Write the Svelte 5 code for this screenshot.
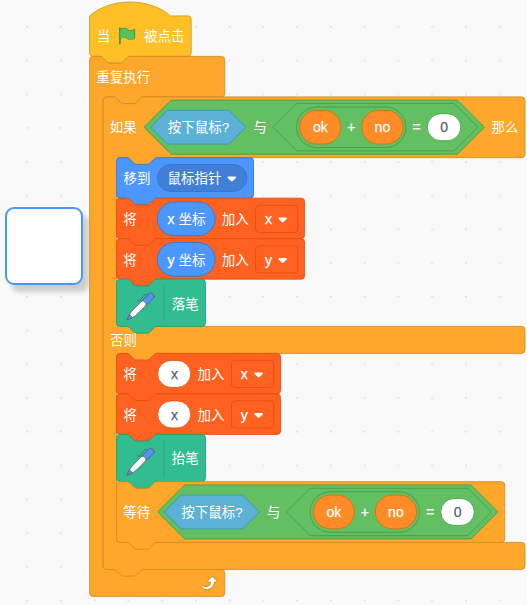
<script>
  const U = 0.84375;
  const OX = 89.6;
  const OY = 56.4;
  const notch = 'c2,0 3,1 4,2 l4,4 c1,1 2,2 4,2 h12 c2,0 3,-1 4,-2 l4,-4 c1,-1 2,-2 4,-2';
  const notchBack = 'c-2,0 -3,1 -4,2 l-4,4 c-1,1 -2,2 -4,2 h-12 c-2,0 -3,-1 -4,-2 l-4,-4 c-1,-1 -2,-2 -4,-2';

  const top = (x, y, w) => `M${x},${y + 4} a4,4 0 0 1 4,-4 h8 ${notch} H${x + w - 4} a4,4 0 0 1 4,4`;
  const bottom = (x, y, tab = true) =>
    `V${y - 4} a4,4 0 0 1 -4,4 ${tab ? `H${x + 48} ${notchBack}` : ''} H${x + 4} a4,4 0 0 1 -4,-4 Z`;
  const stack = (x, y, w, h) => `${top(x, y, w)} ${bottom(x, y + h)}`;
  const mouth = (x, w, y1, y2) =>
    `V${y1 - 4} a4,4 0 0 1 -4,4 H${x + 64} ${notchBack} h-8 a4,4 0 0 0 -4,4 V${y2 - 4} a4,4 0 0 0 4,4 H${x + w - 4} a4,4 0 0 1 4,4`;

  const hat = `M0,-48 c25,-22 71,-22 96,0 H116.4 a4,4 0 0 1 4,4 ${bottom(0, 0)}`;
  const forever = `${top(0, 0, 160.2)} ${mouth(0, 160.2, 48, 608)} ${bottom(0, 640, false)}`;
  const ifElse = `${top(16, 48, 500)} ${mouth(16, 500, 120, 320)} ${mouth(16, 500, 352, 576)} ${bottom(16, 608)}`;

  const blocks = [
    { kind: 'event', d: hat },
    { kind: 'control', d: forever },
    { kind: 'control', d: ifElse },
    { kind: 'motion', d: stack(32, 120, 162.3, 48) },
    { kind: 'data', d: stack(32, 168, 222.8, 48) },
    { kind: 'data', d: stack(32, 216, 222.8, 48) },
    { kind: 'pen', d: stack(32, 264, 105.3, 56) },
    { kind: 'data', d: stack(32, 352, 194.3, 48) },
    { kind: 'data', d: stack(32, 400, 194.3, 48) },
    { kind: 'pen', d: stack(32, 448, 105.3, 56) },
    { kind: 'control', d: stack(32, 504, 460, 72) }
  ];

  const hex = (x1, x2, cy, r) =>
    `${x1},${cy} ${x1 + r},${cy - r} ${x2 - r},${cy - r} ${x2},${cy} ${x2 - r},${cy + r} ${x1 + r},${cy + r}`;

  const conditions = [[0, 0], [13.5, 384.75]];
  const labels = [
    [96.8, 36.2, '当'], [144, 36.2, '被点击'], [96.3, 77, '重复执行'],
    [109.8, 127.1, '如果'], [491.5, 127.1, '那么'], [123.4, 178, '移到'],
    [167.5, 178, '鼠标指针'], [171.8, 303.4, '落笔'],
    [109.9, 340, '否则'], [171.8, 458.3, '抬笔'], [123.3, 512, '等待']
  ];
  const changes = [
    { y: 218.9, name: 'x', axis: 'x' },
    { y: 259.4, name: 'y', axis: 'y' },
    { y: 373.9, name: 'x' },
    { y: 414.4, name: 'y' }
  ];
  const pens = [289.2, 444.5];
</script>

{#snippet arrow(x, y)}
  <path class="arrow" d="M{x - 3.6},{y - 2} h7.2 q1.3,0.7 0.4,1.6 l-3,3 q-1,0.9 -2,0 l-3,-3 q-0.9,-0.9 0.4,-1.6 z" />
{/snippet}

<div class="workspace">
  <svg class="canvas" width="527" height="605" viewBox="0 0 527 605">
    <defs>
      <pattern id="dots" x="26.2" y="26" width="33.75" height="33.75" patternUnits="userSpaceOnUse">
        <path d="M0,0.7 h1.8 M0.9,0 v1.6" stroke="#d9d9d9" stroke-width="0.9" />
      </pattern>
    </defs>
    <rect width="527" height="605" fill="url(#dots)" />
  </svg>
  <div class="monitor"></div>
  <svg class="canvas" width="527" height="605" viewBox="0 0 527 605">
    <g transform="translate({OX} {OY}) scale({U})">
      {#each blocks as b}
        <path class={b.kind} d={b.d} />
      {/each}
    </g>

    <g transform="translate(116.9 25.9) scale({U})">
      <path
        d="M20.8 3.7c-.4-.2-.9-.1-1.2.2-2 1.6-4.8 1.6-6.8 0-2.3-1.9-5.6-2.3-8.3-1v-.4c0-.6-.5-1-1-1s-1 .4-1 1v18.8c0 .5.5 1 1 1h.1c.5 0 1-.4 1-1v-6.4c1-.7 2.1-1.2 3.4-1.3 1.2 0 2.4.4 3.4 1.2 2.9 2.3 7 2.3 9.8 0 .3-.2.4-.5.4-.9V4.7c0-.5-.3-.9-.8-1z"
        fill="#45993d"
      />
      <path
        d="M20.5 4.8v10.1c-2.5 2-6.1 2-8.5 0-2.2-1.7-5.3-1.9-8-.3V4c2.5-1.5 5.8-1.3 8.1.6 2.4 2 5.9 2 8.4.2z"
        fill="#57c060"
      />
    </g>

    <g transform="translate(197.9 572.5) scale({U})">
      <path
        d="M23.3 11c-.3.6-.9 1-1.5 1h-1.6c-.1 1.3-.5 2.5-1.1 3.6-.9 1.7-2.3 3.2-4.1 4.1-1.7.9-3.6 1.2-5.5.9-1.8-.3-3.5-1.1-4.9-2.3-.7-.7-.7-1.9 0-2.6.6-.6 1.6-.7 2.3-.2H7c.9.6 1.9.9 2.9.9s1.9-.3 2.7-.9c1.1-.8 1.8-2.1 1.8-3.5h-1.5c-.9 0-1.7-.7-1.7-1.7 0-.4.2-.9.5-1.2l4.4-4.4c.7-.6 1.7-.6 2.4 0L23 9.2c.5.5.6 1.2.3 1.8z"
        fill="#cf8b17"
      />
      <path
        d="M21.8 11h-2.6c0 1.5-.3 2.9-1 4.2-.8 1.6-2.1 2.8-3.7 3.6-1.5.8-3.3 1.1-4.9.8-1.6-.2-3.2-1-4.4-2.1-.4-.3-.4-.9-.1-1.2.3-.4.9-.4 1.2-.1 1 .7 2.2 1.1 3.4 1.1s2.3-.3 3.3-1c.9-.6 1.6-1.5 2-2.6.3-.9.4-1.8.2-2.8h-2.4c-.4 0-.7-.3-.7-.7 0-.2.1-.3.2-.4l4.4-4.4c.3-.3.7-.3.9 0L22 9.8c.3.3.4.6.3.9s-.3.3-.5.3z"
        fill="#fff"
      />
    </g>

    {#each conditions as [dx, dy]}
      <g transform="translate({dx} {dy})">
        <polygon class="operator" points={hex(144, 484.5, 127.2, 27)} />
        <polygon class="sensing" points={hex(150.7, 245.8, 127.2, 16.9)} />
        <polygon class="operator" points={hex(273, 478, 127.2, 23.7)} />
        <rect class="operator" x="296.5" y="107" width="109.4" height="40.5" rx="20.25" />
        <rect class="variable" x="299.8" y="110.3" width="41" height="33.75" rx="16.9" />
        <rect class="variable" x="361.8" y="110.3" width="41.3" height="33.75" rx="16.9" />
        <rect class="input" x="427.3" y="113.7" width="33.5" height="27" rx="13.5" />
        <text x="167.8" y="132.1">按下鼠标?</text>
        <text x="253.2" y="132.1">与</text>
        <text class="mid" x="320.3" y="132">ok</text>
        <text class="mid" x="351.4" y="132">+</text>
        <text class="mid" x="382.4" y="132">no</text>
        <text class="mid" x="416.7" y="132">=</text>
        <text class="mid dark" x="444.1" y="132">0</text>
      </g>
    {/each}

    <rect class="menu" x="157.4" y="164.5" width="89.5" height="27" rx="13.5" />
    {@render arrow(231.8, 178.4)}

    {#each changes as c}
      {@const s = c.axis ? 0 : -24.1}
      {#if c.axis}
        <rect class="motion" x="157.3" y={c.y - 16.9} width="57.8" height="33.75" rx="16.9" />
        <text class="mid" x="171.1" y={c.y + 5.1}>{c.axis}</text>
        <text x="178.6" y={c.y + 5.1}>坐标</text>
      {:else}
        <rect class="input warm" x="157.7" y={c.y - 13.5} width="33" height="27" rx="13.5" />
        <text class="mid dark" x="174.4" y={c.y + 5.1}>x</text>
      {/if}
      <text x="123.2" y={c.y + 5.1}>将</text>
      <text x={221.7 + s} y={c.y + 5.1}>加入</text>
      <rect class="field" x={255.6 + s} y={c.y - 13.6} width="42.2" height="27.2" rx="3.4" />
      <text class="mid" x={268.4 + s} y={c.y + 5.1}>{c.name}</text>
      {@render arrow(282.7 + s, c.y + 0.5)}
    {/each}

    {#each pens as y}
      <g class="pen-icon" transform="translate(123.3 {y}) scale({U})">
        <path
          d="M8.753 34.602l-4.25 1.779 1.784-4.236c1.218-2.892 2.907-5.423 5.03-7.538L31.066 4.93c.846-.842 2.65-.41 4.032.967 1.38 1.375 1.816 3.173.97 4.015L16.318 29.59c-2.123 2.116-4.664 3.799-7.565 5.012"
          fill="#fff"
        />
        <path d="M29.41 6.111s-4.45-2.379-8.202 5.771c-1.734 3.766-4.35 1.546-4.35 1.546" fill="none" />
        <path
          d="M36.42 8.825c0 .463-.14.873-.432 1.164l-9.335 9.301c.282-.29.41-.668.41-1.12 0-.874-.507-1.963-1.406-2.868-1.362-1.358-3.147-1.8-4.002-.99L30.99 5.01c.844-.84 2.65-.41 4.035.96.898.904 1.396 1.982 1.396 2.855M10.515 33.774a23.74 23.74 0 0 1-1.764.83L4.5 36.382l1.786-4.235c.258-.604.529-1.186.833-1.757.69.183 1.449.625 2.109 1.282.659.658 1.102 1.412 1.287 2.102"
          fill="#4c97ff"
        />
      </g>
      <path class="divider" d="M164.2,{y - 3.4} v35" />
    {/each}

    {#each labels as [x, y, t]}
      <text {x} y={y + 5.1}>{t}</text>
    {/each}
  </svg>
</div>

<style>
  .workspace {
    position: relative;
    width: 527px;
    height: 605px;
    overflow: hidden;
    background: #f9f9f9;
  }
  .monitor {
    position: absolute;
    left: 4.5px;
    top: 207px;
    width: 78px;
    height: 78px;
    box-sizing: border-box;
    border: 2px solid #4c97ff;
    border-radius: 9px;
    background: #fff;
    box-shadow: 6px 7px 5px rgba(0, 0, 0, 0.18);
  }
  .canvas {
    position: absolute;
    inset: 0;
    display: block;
  }
  text {
    font: 13.5px 'Liberation Sans', 'Noto Sans CJK SC', sans-serif;
    fill: #fff;
    white-space: pre;
  }
  .mid {
    font-size: 14px;
    text-anchor: middle;
    stroke: #fff;
    stroke-width: 0.25;
  }
  .dark {
    fill: #575e75;
    stroke: #575e75;
  }
  .event { fill: #ffbf26; stroke: #cc9b1c; }
  .control { fill: #ffa72b; stroke: #cf8b22; }
  .motion { fill: #4c97ff; stroke: #3373cc; }
  .data { fill: #ff6120; stroke: #e64d0c; }
  .pen { fill: #32bd91; stroke: #1b9c70; }
  .operator { fill: #62c062; stroke: #46994a; stroke-width: 0.85; }
  .sensing { fill: #5cb1d6; stroke: #3a92bd; stroke-width: 0.85; }
  .variable { fill: #ff8c26; stroke: #db6e00; stroke-width: 0.85; }
  rect.motion { stroke-width: 0.85; }
  .menu { fill: #4280d7; stroke: #3373cc; stroke-width: 0.85; }
  .input { fill: #fff; stroke: #46994a; stroke-width: 0.85; }
  .warm { stroke: #e64d0c; }
  .field { fill: #ff6120; stroke: #e64d0c; stroke-width: 0.85; }
  .arrow { fill: #fff; }
  .pen-icon { stroke: #575e75; stroke-linecap: round; stroke-linejoin: round; }
  .divider { stroke: #29a47c; stroke-width: 0.85; }
</style>
